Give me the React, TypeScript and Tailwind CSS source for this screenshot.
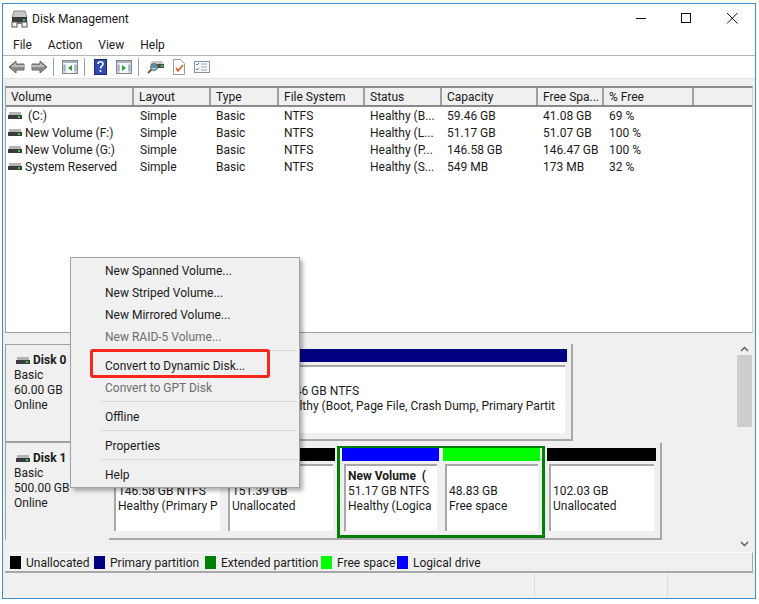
import * as React from "react";

const font = { fontFamily: '"Roboto", "Liberation Sans", sans-serif' };

const columns = [
  { name: "Volume", w: "w-[128px]" },
  { name: "Layout", w: "w-[77px]" },
  { name: "Type", w: "w-[68px]" },
  { name: "File System", w: "w-[86px]" },
  { name: "Status", w: "w-[77px]" },
  { name: "Capacity", w: "w-[96px]" },
  { name: "Free Spa...", w: "w-[66px]" },
  { name: "% Free", w: "w-[90px]" },
];

const volumes = [
  ["\u00a0(C:)", "Simple", "Basic", "NTFS", "Healthy (B...", "59.46 GB", "41.08 GB", "69 %"],
  ["New Volume (F:)", "Simple", "Basic", "NTFS", "Healthy (L...", "51.17 GB", "51.07 GB", "100 %"],
  ["New Volume (G:)", "Simple", "Basic", "NTFS", "Healthy (P...", "146.58 GB", "146.47 GB", "100 %"],
  ["System Reserved", "Simple", "Basic", "NTFS", "Healthy (S...", "549 MB", "173 MB", "32 %"],
];

function DiskIcon() {
  return (
    <svg width="14" height="8" viewBox="0 0 14 8" className="shrink-0">
      <rect x="1" y="0" width="12" height="3" fill="#b4b4b4" />
      <rect x="0" y="3" width="14" height="4" fill="#3c3c3c" />
      <rect x="10" y="4" width="2" height="2" fill="#35d04a" />
    </svg>
  );
}

function TitleIcon() {
  return (
    <svg width="17" height="18" viewBox="0 0 17 18" className="shrink-0">
      <path d="M3 1h11l2 7H1z" fill="#c9c9c9" stroke="#8a8a8a" />
      <rect x="1" y="7" width="15" height="5" fill="#3a3a3a" />
      <rect x="12" y="9" width="2" height="2" fill="#3fd24f" />
      <rect x="1" y="12" width="5" height="5" fill="#f2f2f2" stroke="#555" />
      <rect x="11" y="12" width="5" height="5" fill="#f2f2f2" stroke="#555" />
      <rect x="6" y="12" width="5" height="2" fill="#777" />
    </svg>
  );
}

function NavArrow({ flip }: { flip?: boolean }) {
  return (
    <svg width="17" height="14" viewBox="0 0 17 14" className={flip ? "-scale-x-100" : ""}>
      <path d="M8 1 1 7l7 6V10h8V4H8z" fill="#8c8c8c" stroke="#666" />
      <path d="M8 3 3 7h13V5H8z" fill="#bcbcbc" />
    </svg>
  );
}

function PaneIcon({ play, color }: { play: "l" | "r"; color: string }) {
  return (
    <svg width="16" height="14" viewBox="0 0 16 14">
      <rect x="0.5" y="0.5" width="15" height="13" fill="#f5f7f9" stroke="#7d8791" />
      <rect x="1" y="1" width="14" height="2" fill="#aab2ba" />
      <path d="M1 4h3v9H1zM12 4h3v9h-3z" fill="#d3d9de" />
      <path d="M1.5 6h2M1.5 8h2M1.5 10h2M12.5 6h2M12.5 8h2M12.5 10h2" stroke="#7d8791" />
      <path d={play === "l" ? "M10 5v6L6 8z" : "M6 5v6l4-3z"} fill={color} />
    </svg>
  );
}

function Sep() {
  return <div className="w-px h-[18px] bg-[#a0a0a0]" />;
}

function Toolbar() {
  return (
    <div className="flex items-center h-[23px] bg-white pl-[5px] border-b border-[#e3e3e3]">
      <NavArrow />
      <div className="w-[6px]" />
      <NavArrow flip />
      <div className="w-[5px]" />
      <Sep />
      <div className="w-2" />
      <PaneIcon play="l" color="#2e9e48" />
      <div className="w-[6px]" />
      <Sep />
      <div className="w-[9px]" />
      <svg width="13" height="16" viewBox="0 0 13 16">
        <rect width="13" height="16" fill="#2f4bb4" />
        <rect x="0.5" y="0.5" width="12" height="15" fill="none" stroke="#1a2a78" />
        <path d="M4 5c0-3 5-3 5 0 0 2-2.500 2-2.500 4.500" fill="none" stroke="#fff" strokeWidth="1.600" />
        <rect x="5.700" y="11" width="1.600" height="2" fill="#fff" />
      </svg>
      <div className="w-[9px]" />
      <PaneIcon play="r" color="#2e9e48" />
      <div className="w-[6px]" />
      <Sep />
      <div className="w-2" />
      <svg width="17" height="14" viewBox="0 0 17 14">
        <path d="M5 1h10l2 3H3z" fill="#c8c8c8" />
        <rect x="4" y="4" width="13" height="4" fill="#4d4d4d" />
        <rect x="14" y="5" width="2" height="2" fill="#35d04a" />
        <circle cx="7" cy="7" r="3.500" fill="#5fb6c6" fillOpacity="0.7" stroke="#5a6d78" />
        <path d="M4.500 9.500 1 13" stroke="#6f5a45" strokeWidth="2" />
      </svg>
      <div className="w-[9px]" />
      <svg width="12" height="16" viewBox="0 0 12 16">
        <path d="M.5.500h7l4 4v11H.5z" fill="#fff" stroke="#9a9a9a" />
        <path d="M3 9l2 3 5-6" fill="none" stroke="#e2582c" strokeWidth="1.600" />
      </svg>
      <div className="w-[9px]" />
      <svg width="16" height="12" viewBox="0 0 16 12">
        <rect x="0.500" y="0.500" width="15" height="11" fill="#f7f9fa" stroke="#8a949c" />
        <path d="M2 3l1 1 2-2M2 8l1 1 2-2" fill="none" stroke="#3a7ad0" />
        <path d="M7 3h6M7 6h6M7 9h6" stroke="#9aa3aa" />
      </svg>
    </div>
  );
}

function VolumeList() {
  return (
    <div className="mx-[2px] h-[247px] bg-white border-t-2 border-b border-l border-r border-[#8a8a8a] border-l-[#a0a0a0] border-r-[#d0d0d0] border-b-[#a0a0a0] overflow-hidden">
      <div className="flex h-[19px] border-b-2 border-[#8a8a8a] bg-[#f0f0f0]">
        {columns.map((c) => (
          <div
            key={c.name}
            className={`${c.w} shrink-0 pl-[5px] text-[12px] leading-[19px] text-[#1a1a1a] border-r-2 border-[#a0a0a0]`}
          >
            {c.name}
          </div>
        ))}
      </div>
      {volumes.map((row) => (
        <div key={row[0]} className="flex h-[17px] items-center text-[12px] text-[#1a1a1a]">
          {row.map((cell, i) => (
            <div
              key={i}
              className={`${columns[i].w} shrink-0 flex items-center ${
                i === 0 ? "pl-[2px] gap-[3px]" : i === 1 ? "pl-[6px]" : "pl-[5px]"
              }`}
            >
              {i === 0 && <DiskIcon />}
              <span className="whitespace-nowrap">{cell}</span>
            </div>
          ))}
        </div>
      ))}
    </div>
  );
}

function DiskLabel({ name, size, first }: { name: string; size: string; first?: boolean }) {
  return (
    <div
      className={`w-[98px] shrink-0 pl-[8px] pt-[8px] bg-[#f0f0f0] border-l border-[#a0a0a0] text-[12px] leading-[15px] text-[#1a1a1a] ${
        first ? "border-t" : "border-t-2"
      }`}
    >
      <div className="flex items-center gap-[3px] pl-[2px] font-bold">
        <DiskIcon />
        {name}
      </div>
      <div>Basic</div>
      <div>{size}</div>
      <div>Online</div>
    </div>
  );
}

function Partition({
  bar,
  width,
  lines,
  tight,
}: {
  bar: string;
  width: string;
  lines: string[];
  tight?: boolean;
}) {
  return (
    <div className={`${width} shrink-0 flex flex-col`}>
      <div className={`h-[13px] mb-[3px] mx-[2px] ${bar}`} />
      <div
        className={`flex-1 mx-[4px] mb-[4px] pl-[2px] pr-[2px] bg-white border-t-2 border-l-2 border-[#a8a8a8] text-[12px] leading-[15px] text-[#1a1a1a] ${
          tight ? "pt-[2px]" : "pt-[3px]"
        }`}
      >
        <div className="overflow-hidden whitespace-nowrap">
          {lines.map((l, i) => (
            <div key={i} className={l.startsWith("New Volume") || l === "(C:)" ? "font-bold" : ""}>
              {l || "\u00a0"}
            </div>
          ))}
        </div>
      </div>
    </div>
  );
}

function Graphical() {
  return (
    <div className="mx-[2px] mt-[11px] h-[208px] flex bg-[#f0f0f0]">
      <div className="flex-1 min-w-0 flex flex-col">
        <div className="flex h-[97px]">
          <DiskLabel name="Disk 0" size="60.00 GB" first />
          <div className="ml-[6px] w-[464px] pl-[1px] pr-[2px] pt-[5px] pb-[2px] flex border-r-2 border-b-2 border-[#a8a8a8]">
            <Partition bar="bg-[#000080]" width="w-[160px]" lines={["", "", ""]} tight />
            <Partition
              bar="bg-[#000080]"
              width="w-[299px]"
              lines={["(C:)", "59.46 GB NTFS", "Healthy (Boot, Page File, Crash Dump, Primary Partit"]}
              tight
            />
          </div>
        </div>
        <div className="flex h-[99px]">
          <DiskLabel name="Disk 1" size="500.00 GB" />
          <div className="ml-[6px] mt-[2px] w-[553px] pl-[1px] pt-[5px] pb-[3px] flex border-r-2 border-b-2 border-[#a8a8a8]">
            <Partition bar="bg-[#000080]" width="w-[114px]" lines={["", "146.58 GB NTFS", "Healthy (Primary P"]} />
            <Partition bar="bg-black" width="w-[113px]" lines={["", "151.39 GB", "Unallocated"]} />
            <div className="w-[208px] shrink-0 flex border-x-[3px] border-t-2 border-b-[3px] border-[#008000] -mt-[2px] -mb-[3px]">
              <Partition bar="bg-[#0000ff]" width="w-[101px]" lines={["New Volume\u00a0\u00a0(", "51.17 GB NTFS", "Healthy (Logica"]} />
              <Partition bar="bg-[#00ff00]" width="w-[101px]" lines={["", "48.83 GB", "Free space"]} />
            </div>
            <Partition bar="bg-black" width="w-[113px]" lines={["", "102.03 GB", "Unallocated"]} />
          </div>
        </div>
      </div>
      <div className="w-[15px] mr-[1px] flex flex-col items-center bg-[#f0f0f0]">
        <svg width="9" height="6" viewBox="0 0 9 6" className="mt-[2px]">
          <path d="M1 5l3.500-3.500L8 5" fill="none" stroke="#606060" strokeWidth="1.500" />
        </svg>
        <div className="w-full h-[72px] mt-[3px] bg-[#cdcdcd]" />
        <div className="flex-1" />
        <svg width="9" height="6" viewBox="0 0 9 6" className="mb-[5px]">
          <path d="M1 1l3.500 3.500L8 1" fill="none" stroke="#606060" strokeWidth="1.500" />
        </svg>
      </div>
    </div>
  );
}

function Legend() {
  const items = [
    ["bg-black", "Unallocated", "w-[84px]"],
    ["bg-[#000080]", "Primary partition", "w-[111px]"],
    ["bg-[#008000]", "Extended partition", "w-[116px]"],
    ["bg-[#00ff00]", "Free space", "w-[76px]"],
    ["bg-[#0000ff]", "Logical drive", "w-[100px]"],
  ];
  return (
    <div className="mx-[2px] h-[21px] flex items-center pl-[5px] pt-[1px] bg-[#f0f0f0] border-t border-[#fcfcfc] border-b-2 border-b-[#a8a8a8] border-r border-r-[#a8a8a8]">
      {items.map(([c, label, w]) => (
        <div key={label} className={`${w} shrink-0 flex items-center gap-[5px] text-[12px] text-[#1a1a1a]`}>
          <div className={`w-[11px] h-[13px] ${c}`} />
          <span className="pt-[1px]">{label}</span>
        </div>
      ))}
    </div>
  );
}

function MenuItem({ label, disabled }: { label: string; disabled?: boolean }) {
  return (
    <div className={`h-[22px] pl-[34px] text-[12px] leading-[24px] ${disabled ? "text-[#6d6d6d]" : "text-[#1a1a1a]"}`}>
      {label}
    </div>
  );
}

function MenuSep() {
  return <div className="ml-[30px] mr-[2px] my-[3px] h-px bg-[#d7d7d7]" />;
}

function ContextMenu() {
  return (
    <div className="absolute left-[70px] top-[257px] w-[230px] pt-[1px] pb-[2px] bg-[#f0f0f0] border border-[#a0a0a0] shadow-[3px_3px_4px_rgba(0,0,0,0.3)]">
      <MenuItem label="New Spanned Volume..." />
      <MenuItem label="New Striped Volume..." />
      <MenuItem label="New Mirrored Volume..." />
      <MenuItem label="New RAID-5 Volume..." disabled />
      <MenuSep />
      <MenuItem label="Convert to Dynamic Disk..." />
      <MenuItem label="Convert to GPT Disk" disabled />
      <MenuSep />
      <MenuItem label="Offline" />
      <MenuSep />
      <MenuItem label="Properties" />
      <MenuSep />
      <MenuItem label="Help" />
    </div>
  );
}

export default function App() {
  return (
    <div className="relative w-[759px] h-[604px] bg-white pl-[2px] pt-[3px]" style={font}>
      <div className="w-[754px] h-[596px] flex flex-col border border-[#3c8fd0] bg-[#f0f0f0]">
        <div className="flex items-center h-[31px] bg-white pl-[8px] pb-[2px] text-[12px] text-[#1a1a1a]">
          <TitleIcon />
          <span className="ml-[4px]">Disk Management</span>
          <div className="flex-1" />
          <svg width="103" height="14" viewBox="0 0 103 14" className="mr-[16px] -mt-[1px]">
            <path d="M0 7.500h10" stroke="#111" />
            <rect x="45.500" y="2.500" width="9" height="9" fill="none" stroke="#111" />
            <path d="M91 2 101.500 12.500M101.500 2 91 12.500" stroke="#111" />
          </svg>
        </div>
        <div className="flex items-center gap-[16px] h-[21px] bg-white pl-[10px] border-b border-[#b5b5b5] text-[12px] text-[#1a1a1a]">
          <span>File</span>
          <span>Action</span>
          <span>View</span>
          <span>Help</span>
        </div>
        <Toolbar />
        <div className="h-[7px]" />
        <VolumeList />
        <Graphical />
        <Legend />
        <div className="flex-1 mx-[2px] flex justify-end py-[1px]">
          <div className="w-px bg-[#dcdcdc] mr-[132px]" />
          <div className="w-px bg-[#dcdcdc] mr-[85px]" />
        </div>
      </div>
      <ContextMenu />
      <div className="absolute left-[90px] top-[349px] w-[180px] h-[29px] border-[3px] border-[#f5261c] rounded-[3px]" />
    </div>
  );
}
